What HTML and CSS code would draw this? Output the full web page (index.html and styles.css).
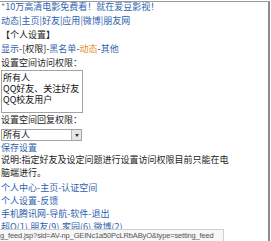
FILE: index.html
```html
<!DOCTYPE html>
<html lang="zh">
<head>
<meta charset="utf-8">
<link rel="stylesheet" href="styles.css">
</head>
<body>
<div class="frame">
  <div class="line ad"><span class="star">*</span><a href="#">10万高清电影免费看！就在爱豆影视！</a></div>
  <div class="line tabs"><a href="#">动态</a>|<a href="#">主页</a>|<a href="#">好友</a>|<a href="#">应用</a>|<a href="#">微博</a>|<a href="#">朋友网</a></div>
  <div class="line title">【个人设置】</div>
  <div class="line sub"><a href="#">显示</a>-[权限]-<a href="#">黑名单</a>-<a href="#" class="hot">动态</a>-<a href="#">其他</a></div>
  <div class="line label">设置空间访问权限：</div>
  <div class="listbox">
    <div class="opt">所有人</div>
    <div class="opt">QQ好友、关注好友</div>
    <div class="opt">QQ校友用户</div>
  </div>
  <div class="line label">设置空间回复权限：</div>
  <div class="select"><span class="sel-text">所有人</span><span class="arrow"><span class="tri"></span></span></div>
  <div class="line2"><a href="#">保存设置</a></div>
  <div class="note">说明:指定好友及设定问题进行设置访问权限目前只能在电脑端进行。</div>
  <div class="foot">
    <div class="line2"><a href="#">个人中心</a>-<a href="#">主页</a>-<a href="#">认证空间</a></div>
    <div class="line2"><a href="#">个人设置</a>-<a href="#">反馈</a></div>
    <div class="line2"><a href="#">手机腾讯网</a>-<a href="#">导航</a>-<a href="#">软件</a>-<a href="#">退出</a></div>
    <div class="line2"><a href="#">超Q(1)</a>,<a href="#">朋友(9)</a>,<a href="#">家园(6)</a>,<a href="#">微博(2)</a></div>
  </div>
</div>
<div class="status">g_feed.jsp?sid=AV-np_GEINc1a50PcLRbAByO&amp;type=setting_feed</div>
</body>
</html>
```
FILE: styles.css
```css
html, body {
  margin: 0;
  padding: 0;
  background: #fff;
}
body {
  width: 271px;
  height: 241px;
  overflow: hidden;
  position: relative;
  font-family: "Noto Sans CJK SC", "Noto Sans", sans-serif;
  font-size: 9px;
  color: #222;
}
a {
  color: #2f5fae;
  text-decoration: none;
}
.frame {
  margin-top: 1px;
  width: 270px;
  height: 240px;
  border-top: 1px solid #9a9a9a;
  border-right: 2px solid #8c8c8c;
  padding-left: 1px;
  box-sizing: border-box;
}
.line {
  height: 14px;
  line-height: 14px;
  white-space: nowrap;
}
.ad {
  margin-top: -2px;
}
.star {
  color: #888;
}
.tabs {
  color: #2f5fae;
}
.hot {
  color: #e58a1f;
}
.listbox {
  width: 82px;
  height: 43px;
  border: 1px solid #a3a3a3;
  box-sizing: border-box;
  padding: 1px 0 0 1px;
  color: #111;
}
.opt {
  line-height: 11px;
  height: 11px;
}
.select {
  margin-top: 2px;
  width: 81px;
  height: 12px;
  border: 1px solid #a3a3a3;
  box-sizing: border-box;
  display: flex;
  align-items: center;
  justify-content: space-between;
  line-height: 10px;
}
.sel-text {
  padding-left: 1px;
}
.arrow {
  width: 9px;
  height: 10px;
  background: #e6e6e6;
  border-left: 1px solid #b5b5b5;
  display: flex;
  align-items: center;
  justify-content: center;
}
.tri {
  width: 0;
  height: 0;
  border-left: 2.5px solid transparent;
  border-right: 2.5px solid transparent;
  border-top: 3px solid #333;
}
.line2 {
  height: 13px;
  line-height: 13px;
  white-space: nowrap;
}
.note {
  line-height: 13px;
  width: 230px;
  margin-top: -1px;
}
.foot {
  margin-top: 2px;
  color: #2f5fae;
}
.status {
  position: absolute;
  left: 0;
  top: 229px;
  width: 224px;
  height: 12px;
  box-sizing: border-box;
  background: #f7f7f7;
  border-top: 1px solid #d0d0d0;
  border-right: 1px solid #d0d0d0;
  font-family: "Liberation Sans", Arial, sans-serif;
  font-size: 7.5px;
  letter-spacing: -0.15px;
  line-height: 11px;
  color: #555;
  white-space: nowrap;
  overflow: hidden;
}
```
